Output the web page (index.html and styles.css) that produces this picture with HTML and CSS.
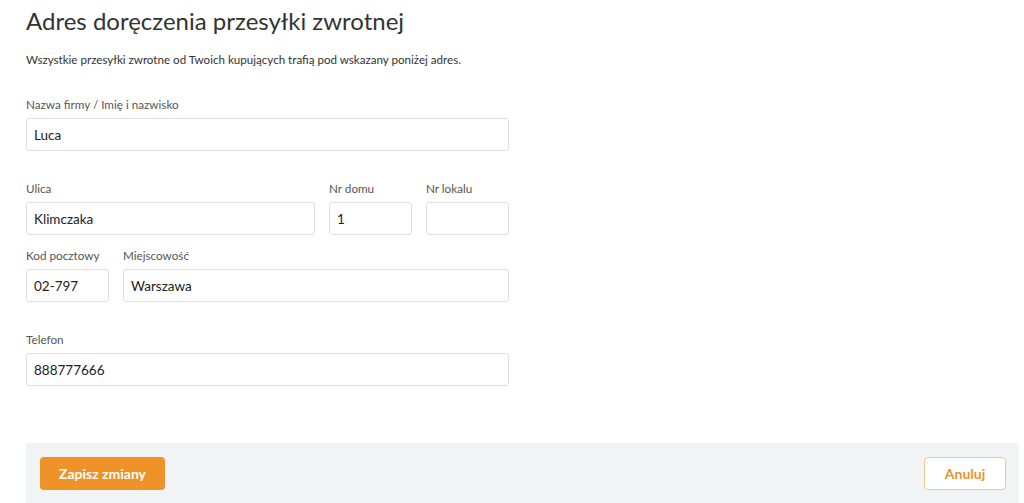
FILE: index.html
```html
<!DOCTYPE html>
<html lang="pl">
<head>
  <meta charset="UTF-8">
  <meta name="viewport" content="width=device-width, initial-scale=1.0">
  <title>Adres doręczenia przesyłki zwrotnej</title>
  <link rel="stylesheet" href="styles.css">
</head>
<body>
  <div class="page">
    <h1 class="title">Adres doręczenia przesyłki zwrotnej</h1>
    <p class="lead">Wszystkie przesyłki zwrotne od Twoich kupujących trafią pod wskazany poniżej adres.</p>

    <form class="form">
      <div class="row row-name">
        <div class="field">
          <label class="label">Nazwa firmy / Imię i nazwisko</label>
          <input class="input" type="text" value="Luca">
        </div>
      </div>

      <div class="row row-street">
        <div class="field">
          <label class="label">Ulica</label>
          <input class="input" type="text" value="Klimczaka">
        </div>
        <div class="field">
          <label class="label">Nr domu</label>
          <input class="input" type="text" value="1">
        </div>
        <div class="field">
          <label class="label">Nr lokalu</label>
          <input class="input" type="text" value="">
        </div>
      </div>

      <div class="row row-city">
        <div class="field">
          <label class="label">Kod pocztowy</label>
          <input class="input" type="text" value="02-797">
        </div>
        <div class="field">
          <label class="label">Miejscowość</label>
          <input class="input" type="text" value="Warszawa">
        </div>
      </div>

      <div class="row row-phone">
        <div class="field">
          <label class="label">Telefon</label>
          <input class="input" type="text" value="888777666">
        </div>
      </div>
    </form>

    <div class="actions">
      <button class="btn btn-primary" type="button">Zapisz zmiany</button>
      <button class="btn btn-cancel" type="button">Anuluj</button>
    </div>
  </div>
</body>
</html>
```

FILE: styles.css
```css
body {
  margin: 0;
  background: #fff;
  color: #333;
  font-family: 'Lato', 'Open Sans', sans-serif;
}

.page {
  padding: 0 5px 0 26px;
}

.title {
  margin: 6px 0 0;
  font-size: 24px;
  font-weight: 400;
  line-height: 30px;
  color: #333;
}

.lead {
  margin: 16px 0 0;
  font-size: 11.6px;
  line-height: 16px;
  color: #333;
}

.form {
  width: 483px;
  margin-top: 28px;
}

.row {
  display: grid;
  gap: 14px;
}

.row-street {
  grid-template-columns: 1fr 83px 83px;
  margin-top: 29px;
}

.row-city {
  grid-template-columns: 83px 1fr;
  margin-top: 12px;
}

.row-phone {
  margin-top: 29px;
}

.field {
  display: flex;
  flex-direction: column;
}

.label {
  font-size: 11.7px;
  line-height: 16px;
  color: #555;
  margin-bottom: 6px;
}

.input {
  box-sizing: border-box;
  height: 33px;
  width: 100%;
  padding: 0 7px;
  border: 1px solid #dcdee2;
  border-radius: 3px;
  font-family: inherit;
  font-size: 13.5px;
  color: #222;
  background: #fff;
}

.actions {
  display: flex;
  justify-content: space-between;
  align-items: center;
  margin-top: 57px;
  padding: 14px 13px 14px 14px;
  background: #f2f3f5;
}

.btn {
  box-sizing: border-box;
  height: 33px;
  border-radius: 4px;
  font-family: inherit;
  font-size: 14px;
  font-weight: 700;
  cursor: pointer;
}

.btn-primary {
  width: 125px;
  border: none;
  background: #ef9227;
  color: #fff;
}

.btn-cancel {
  width: 82px;
  border: 1px solid #f5c58d;
  background: #fff;
  color: #ef9227;
}
```
